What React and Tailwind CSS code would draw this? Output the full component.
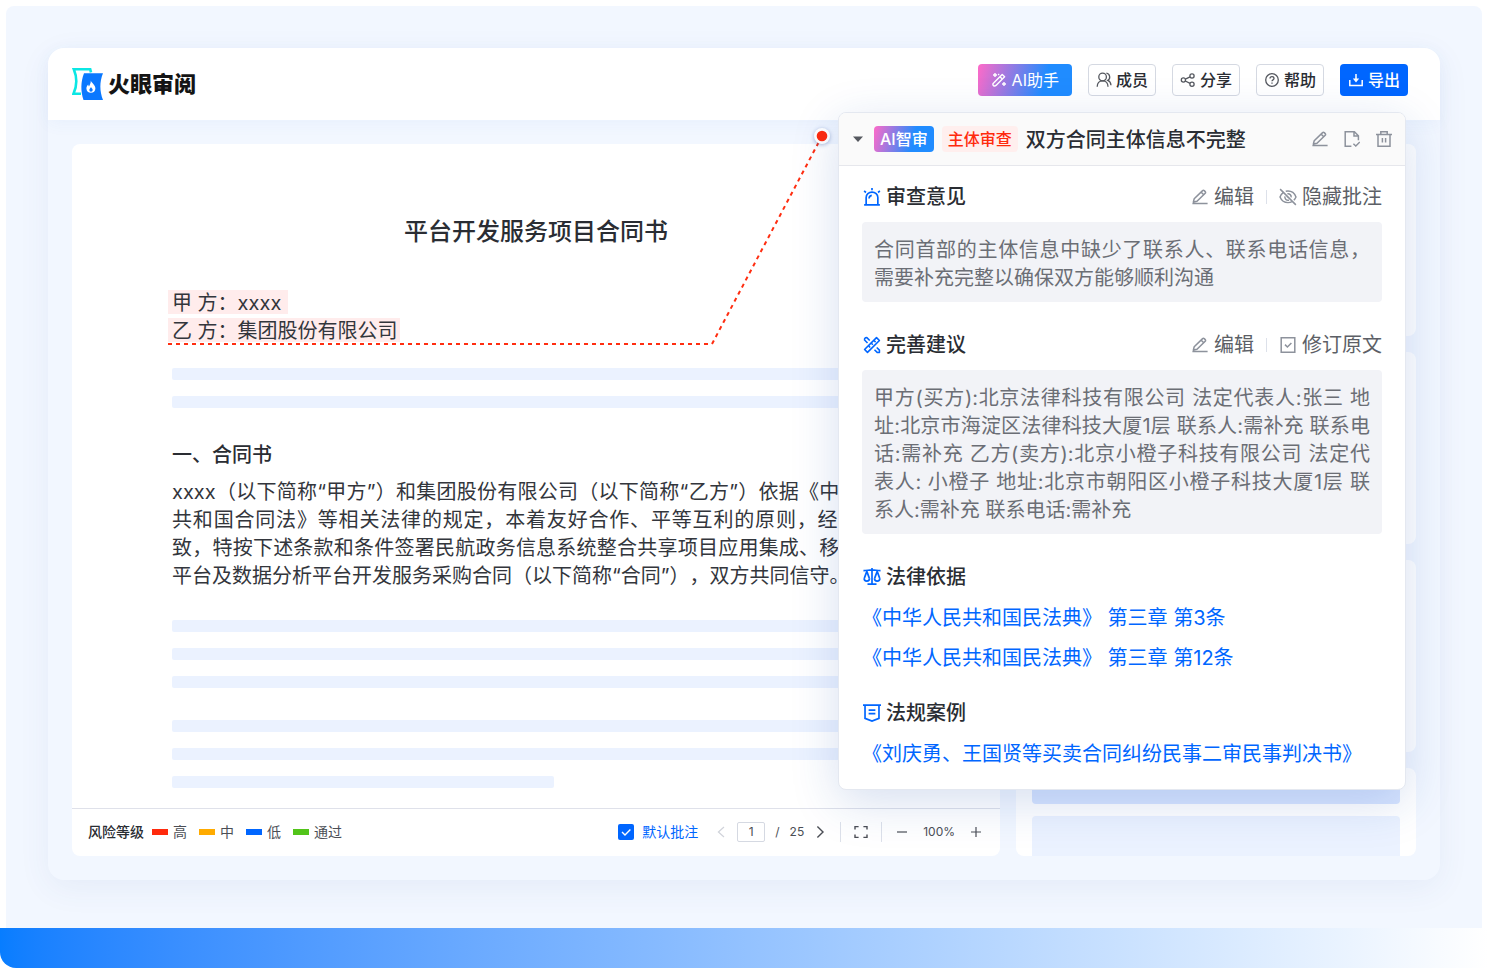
import React from "react";

const Icon = ({ children, className = "size-4", width = 1.2 }) => (
  <svg
    viewBox="0 0 16 16"
    className={`shrink-0 ${className}`}
    fill="none"
    stroke="currentColor"
    strokeWidth={width}
    aria-hidden="true"
  >
    {children}
  </svg>
);

const WandIcon = () => (
  <Icon width={1.4}>
    <path d="M11.2 2.4 13.6 4.8 5 13.4Q3.6 14.6 2.4 13.4 1.2 12.2 2.6 11Z" strokeLinejoin="round" />
    <path d="M9 4.8 11.2 7" />
    <path d="M4 1v4M2 3h4M13 10v4M11 12h4" />
    <path d="M7.6 1.800v1.400" />
  </Icon>
);
const MembersIcon = () => (
  <Icon width={1.3}>
    <circle cx="6.6" cy="5" r="3.8" />
    <path d="M1.2 14.800c0-3.400 2-6 5.400-6s5.400 2.600 5.400 6M10.400 1.200a3.900 3.900 0 0 1 1.400 7.200c2 .8 3 2.600 3.200 4.800" />
  </Icon>
);
const ShareIcon = () => (
  <Icon width={1.3}>
    <circle cx="3.4" cy="8" r="2.1" />
    <circle cx="12" cy="4" r="2.1" />
    <circle cx="12" cy="12.2" r="2.1" />
    <path d="m5.300 7.100 4.800-2.200M5.300 9l4.800 2.300" />
  </Icon>
);
const HelpIcon = () => (
  <Icon width={1.3}>
    <circle cx="8" cy="8" r="6.3" />
    <path d="M6 6.600c0-1.200.9-1.900 2-1.900s2 .8 2 1.800c0 1.400-2 1.400-2 2.800M8 10.400v1.300" />
  </Icon>
);
const ExportIcon = () => (
  <Icon width={1.5}>
    <path d="M1.800 8v5.400h12.400V8M8 2v6" />
    <path d="M4.800 6.600h6.400L8 10.400Z" fill="currentColor" stroke="none" />
  </Icon>
);
const EditIcon = () => (
  <Icon width={1.5}>
    <path d="M.4 14.600h15.200M1.400 13l.8-3.200L10.600 1.600q.8-.7 1.600 0l1 1q.8.8 0 1.600L5 12.200Z" strokeLinejoin="round" />
    <path d="m9.200 3.200 2.600 2.600" />
  </Icon>
);
const FileCheckIcon = () => (
  <Icon width={1.5}>
    <path d="M7.400 15.200H1.200V.8h9.200l4 4v4.400M10 1v4h4" />
    <path d="m9.400 12.800 2.400 2.200 4-4" />
  </Icon>
);
const TrashIcon = () => (
  <Icon width={1.5}>
    <path d="M0 3.600h16M4.800 3.200V.8h6.400v2.400M2 3.800v11.400h12V3.800M6.400 7v4.600M9.600 7v4.600" />
  </Icon>
);
const HideIcon = () => (
  <Icon className="-mx-px size-[18px]" width={1.3}>
    <path d="M4.200 3.600C2.800 4.600 1.600 6.100.9 8c1.300 3.200 3.900 5 7.100 5 1.300 0 2.600-.3 3.600-.9M6 2.900c.7-.2 1.300-.2 2-.2 3.200 0 5.800 1.900 7.100 5.300-.5 1.100-1.100 2.100-1.900 2.900" />
    <path d="M5.300 7.400a2.800 2.800 0 0 0 3.600 3.400M7.400 5.200A2.800 2.800 0 0 1 10.800 8.400M6.900 7.300l1.800 1.600M1 1l14 14" />
  </Icon>
);
const CheckBoxIcon = () => (
  <Icon width={1.5}>
    <path d="M1.200.8h13.600v14.400H1.200ZM5 7.600l2.400 2.400 4-4" />
  </Icon>
);
const AlarmIcon = () => (
  <Icon className="-mr-px size-[18px]" width={1.5}>
    <path d="M1 15h14M2.800 15V8.400a5.200 4.800 0 0 1 10.400 0V15M5.400 9.400C5.400 7.600 6.400 6.800 7.800 6.600" />
    <path d="M8 0v2M1 2.600l1.600 1.400M15 2.600 13.400 4" />
  </Icon>
);
const RulerPenIcon = () => (
  <Icon className="-mr-px size-[18px]" width={1.4}>
    <path d="M12 1.400 14.600 4 4 14.600 1.400 12Z" strokeLinejoin="round" />
    <path d="m9.800 4 1.400 1.400M7.400 6.400l1.400 1.400M5 8.800l1.400 1.400" />
    <path d="M4 6.200 1.400 3.600Q1 1.400 3.400 1.400L6 4M10.200 12.200l2.400 2.400h2V12.600L12.200 10.200" strokeLinejoin="round" />
  </Icon>
);
const ScaleIcon = () => (
  <Icon className="-mr-px size-[18px]" width={1.5}>
    <path d="M8 0v14.400M4 14.400h8M.4 2.400c3 0 5-.8 7.600-.8s4.600.8 7.600.8" />
    <path d="M3.400 3 1.200 9M3.400 3l2.200 6M1 9c0 1.800 1 2.600 2.400 2.600S5.800 10.800 5.800 9M12.600 3l-2.200 6M12.600 3l2.200 6M10.200 9c0 1.800 1 2.600 2.400 2.600s2.400-.8 2.400-2.600" />
  </Icon>
);
const CaseIcon = () => (
  <Icon className="-mr-px size-[18px]" width={1.5}>
    <path d="M0 1h16M1.800 1v11.800L8 15.200l6.200-2.400V1M5 5.400h6M5 8.600h6" />
  </Icon>
);

const Logo = () => (
  <a href="#" className="flex items-center gap-1 text-[#141414]">
    <svg viewBox="0 0 32 32" className="size-8" aria-hidden="true">
      <path
        d="M19 4.400 18.200 1.300H1.800C5 9 5 18 1.500 25.700H9"
        fill="none"
        stroke="#0be7e4"
        strokeWidth="2.6"
      />
      <path d="M12 5.200H31C27.400 14 27.600 23 31 32H11.500C8.600 23 8.600 14 12 5.200Z" fill="#0a78ff" />
      <path
        d="M18.800 12.600c.6 2.400 4.600 4.200 4.600 7.800 0 2.600-2 4.300-4.500 4.300s-4.500-1.700-4.500-4.300c0-1.700.9-2.800 1.800-3.800.1.900.3 1.400.8 1.800.8-1.500 2-3.200 1.800-5.800Z"
        fill="#fff"
      />
      <path d="M19 19c.4 1.100 1.700 1.600 1.700 3a1.700 1.700 0 0 1-3.400 0c0-1.300 1.300-1.700 1.700-3Z" fill="#0a78ff" />
    </svg>
    <span className="text-[22px] leading-8 font-black">火眼审阅</span>
  </a>
);

const HeaderButton = ({ icon, children }) => (
  <button className="flex h-8 items-center gap-1 rounded border border-[#d5d9e2] bg-white px-[7px] text-base font-medium text-[#2a2d33]">
    <span className="text-[#55585f]">{icon}</span>
    {children}
  </button>
);

const Header = () => (
  <header className="flex h-[72px] items-center justify-between rounded-t-2xl bg-white pr-8 pl-6 shadow-[0_4px_16px_rgba(60,110,220,0.05)]">
    <Logo />
    <div className="mb-2 flex gap-4">
      <button className="flex h-8 items-center gap-[5px] rounded bg-linear-[105deg,#ff6ac8_0%,#208cff_70%] px-[13px] text-base text-white">
        <WandIcon />
        AI助手
      </button>
      <HeaderButton icon={<MembersIcon />}>成员</HeaderButton>
      <HeaderButton icon={<ShareIcon />}>分享</HeaderButton>
      <HeaderButton icon={<HelpIcon />}>帮助</HeaderButton>
      <button className="flex h-8 items-center gap-1 rounded bg-[#0066ff] px-2 text-base font-medium text-white">
        <ExportIcon />
        导出
      </button>
    </div>
  </header>
);

const Bar = ({ short }) => (
  <div className={`h-3 rounded-xs bg-[#ebf2ff] ${short ? "w-[382px]" : "w-full"}`} />
);

const paragraph = [
  "xxxx（以下简称“甲方”）和集团股份有限公司（以下简称“乙方”）依据《中华人民",
  "共和国合同法》等相关法律的规定，本着友好合作、平等互利的原则，经协商一",
  "致，特按下述条款和条件签署民航政务信息系统整合共享项目应用集成、移动办公",
];

const levels = [
  ["高", "bg-[#ff2a0d]"],
  ["中", "bg-[#ffab00]"],
  ["低", "bg-[#0066ff]"],
  ["通过", "bg-[#52c41a]"],
];

const Toolbar = () => (
  <footer className="mt-5 flex h-12 items-center justify-between border-t border-[#dfe1ea] px-4 pb-0.5 text-sm text-[#4b4e55]">
    <div className="flex items-center gap-3">
      <span className="-mr-1 font-medium text-[#2a2d33]">风险等级</span>
      {levels.map(([name, color]) => (
        <span key={name} className="flex items-center gap-[5px]">
          <i className={`h-1.5 w-4 ${color}`} />
          {name}
        </span>
      ))}
    </div>
    <div className="flex items-center gap-3 text-xs">
      <label className="mr-[3px] flex items-center gap-2 text-sm text-[#0066ff]">
        <span className="grid size-4">
          <input
            type="checkbox"
            defaultChecked
            className="col-start-1 row-start-1 size-4 appearance-none rounded-xs bg-[#0066ff]"
          />
          <Icon className="pointer-events-none col-start-1 row-start-1 size-4 text-white" width={1.4}>
            <path d="m4 8 3 3 5.400-5.400" />
          </Icon>
        </span>
        默认批注
      </label>
      <div className="flex items-center gap-2">
        <button aria-label="上一页" className="text-[#d0d3da]">
          <Icon>
            <path d="M11 3 5.400 8 11 13" />
          </Icon>
        </button>
        <input
          aria-label="页码"
          defaultValue="1"
          className="h-5 w-7 rounded-xs border border-[#d5d9e2] bg-transparent text-center"
        />
        <span className="px-0.5">/</span>
        <span>25</span>
        <button aria-label="下一页" className="text-[#4b4e55]">
          <Icon width={1.4}>
            <path d="m5.400 2.600 5.600 5.400-5.600 5.400" />
          </Icon>
        </button>
      </div>
      <i className="h-5 w-px bg-[#dde1ea]" />
      <button aria-label="全屏">
        <Icon width={1.4}>
          <path d="M2 5.600V2.600h3.600M10.400 2.600H14v3M14 10.400v3h-3.600M5.600 13.400H2v-3" />
        </Icon>
      </button>
      <i className="h-5 w-px bg-[#dde1ea]" />
      <button aria-label="缩小">
        <Icon>
          <path d="M3 8h10" />
        </Icon>
      </button>
      <span className="px-px">100%</span>
      <button aria-label="放大">
        <Icon>
          <path d="M3 8h10M8 3v10" />
        </Icon>
      </button>
    </div>
  </footer>
);

const Contract = () => (
  <article className="relative min-w-0 flex-1 rounded-lg bg-white">
    <div className="px-[100px] pt-[72px] text-xl leading-7 text-[#33363c]">
      <h1 className="text-center text-2xl leading-8 font-medium text-[#2a2d33]">平台开发服务项目合同书</h1>
      <div className="-mx-1 mt-10 flex flex-col items-start gap-1 pt-0.5 leading-[22px]">
        <p className="w-[120px] bg-[#ffecec] px-1 pt-0.5 whitespace-pre">甲 方：xxxx</p>
        <p className="bg-[#ffecec] pt-0.5 pr-0.5 pl-1 whitespace-pre">乙 方：集团股份有限公司</p>
      </div>
      <div className="mt-[26px] space-y-4">
        <Bar />
        <Bar />
      </div>
      <h2 className="mt-[33px] font-medium text-[#2a2d33]">一、合同书</h2>
      <div className="mt-[9px] [text-spacing-trim:space-all]">
        {paragraph.map((line) => (
          <p key={line} className="text-justify whitespace-nowrap [text-align-last:justify]">
            {line}
          </p>
        ))}
        <p>平台及数据分析平台开发服务采购合同（以下简称“合同”），双方共同信守。</p>
      </div>
      <div className="mt-[30px] space-y-4">
        <Bar />
        <Bar />
        <Bar />
      </div>
      <div className="mt-8 space-y-4">
        <Bar />
        <Bar />
        <Bar short />
      </div>
    </div>
    <Toolbar />
    <svg
      viewBox="0 0 780 230"
      className="pointer-events-none absolute -top-5 left-0 h-[230px] w-[780px]"
      aria-hidden="true"
    >
      <path d="M96 220H640L750 12" fill="none" stroke="#ff2d10" strokeWidth="2" strokeDasharray="4 4" />
      <circle cx="750" cy="12" r="8" fill="#fff" className="drop-shadow-[0_1px_2px_rgba(40,80,160,0.4)]" />
      <circle cx="750" cy="12" r="5.3" fill="#ff2a0d" />
    </svg>
  </article>
);

const SideCards = () => (
  <aside className="flex w-[400px] shrink-0 flex-col gap-4">
    <div className="h-48 rounded-lg bg-white" />
    <div className="h-48 rounded-lg bg-white" />
    <div className="h-48 rounded-lg bg-white" />
    <div className="flex flex-1 flex-col gap-3 rounded-lg bg-white px-4 pt-4">
      <div className="h-5 rounded-sm bg-[#d8e5ff]" />
      <div className="flex-1 rounded-t-sm bg-[#ebf2ff]" />
    </div>
  </aside>
);

const Action = ({ icon, children }) => (
  <button className="flex items-center gap-1.5 text-[#5c5f66]">
    <span className="text-[#8d929c]">{icon}</span>
    {children}
  </button>
);

const SectionTitle = ({ icon, title, action }) => (
  <div className="flex h-[30px] items-center justify-between">
    <h3 className="flex items-center gap-1.5 pl-px font-medium text-[#2a2d33]">
      <span className="text-[#0066ff]">{icon}</span>
      {title}
    </h3>
    {action && (
      <div className="flex items-center gap-3">
        <Action icon={<EditIcon />}>编辑</Action>
        <i className="mr-px h-3.5 w-px bg-[#dde1ea]" />
        {action}
      </div>
    )}
  </div>
);

const Quote = ({ children }) => (
  <p className="mt-2.5 rounded bg-[#f2f3f7] px-3 pt-3.5 pb-2.5 text-justify leading-7 text-[#6b6e75] [text-spacing-trim:space-all]">
    {children}
  </p>
);

const LawLink = ({ children }) => (
  <a href="#" className="mt-2.5 block h-[30px] pt-px text-[#0066ff] [text-spacing-trim:space-all]">
    {children}
  </a>
);

const ReviewPanel = () => (
  <section className="absolute top-16 right-[34px] w-[568px] overflow-hidden rounded-lg border border-[#e4e8f0] bg-white text-xl leading-[30px] shadow-[0_12px_48px_rgba(30,80,170,0.18)]">
    <header className="flex h-[53px] items-center gap-2 border-b border-[#e6e7ec] bg-[#fafafa] pr-[13px] pl-[11px]">
      <button aria-label="收起" className="text-[#55585f]">
        <Icon>
          <path d="M3 5.400h10L8 11Z" fill="currentColor" stroke="none" />
        </Icon>
      </button>
      <span className="rounded bg-linear-[105deg,#ff6ac8_0%,#208cff_65%] px-1.5 text-base leading-[26px] font-medium text-white">
        AI智审
      </span>
      <span className="rounded bg-[#ffefee] px-1.5 text-base leading-[26px] font-medium text-[#ff2a0d]">主体审查</span>
      <h2 className="flex-1 pt-0.5 font-medium text-[#2a2d33]">双方合同主体信息不完整</h2>
      <div className="flex gap-4 text-[#8d929c]">
        <button aria-label="编辑">
          <EditIcon />
        </button>
        <button aria-label="确认">
          <FileCheckIcon />
        </button>
        <button aria-label="删除">
          <TrashIcon />
        </button>
      </div>
    </header>
    <div className="px-[23px] pt-4 pb-[21px]">
      <SectionTitle icon={<AlarmIcon />} title="审查意见" action={<Action icon={<HideIcon />}>隐藏批注</Action>} />
      <Quote>合同首部的主体信息中缺少了联系人、联系电话信息，需要补充完整以确保双方能够顺利沟通</Quote>
      <div className="mt-7">
        <SectionTitle
          icon={<RulerPenIcon />}
          title="完善建议"
          action={<Action icon={<CheckBoxIcon />}>修订原文</Action>}
        />
        <Quote>
          甲方(买方):北京法律科技有限公司 法定代表人:张三 地址:北京市海淀区法律科技大厦1层 联系人:需补充
          联系电话:需补充 乙方(卖方):北京小橙子科技有限公司 法定代表人: 小橙子
          地址:北京市朝阳区小橙子科技大厦1层 联系人:需补充 联系电话:需补充
        </Quote>
      </div>
      <div className="mt-7">
        <SectionTitle icon={<ScaleIcon />} title="法律依据" />
        <LawLink>《中华人民共和国民法典》 第三章 第3条</LawLink>
        <LawLink>《中华人民共和国民法典》 第三章 第12条</LawLink>
      </div>
      <div className="mt-[26px]">
        <SectionTitle icon={<CaseIcon />} title="法规案例" />
        <LawLink>《刘庆勇、王国贤等买卖合同纠纷民事二审民事判决书》</LawLink>
      </div>
    </div>
  </section>
);

export default function App() {
  return (
    <div className="min-h-screen bg-white pt-1.5 font-[Inter,'Noto_Sans_CJK_SC',sans-serif]" lang="zh-CN">
      <div className="mx-1.5 rounded-t-lg bg-[#f2f7ff] px-[42px] pt-[42px] pb-12">
        <main className="relative rounded-2xl bg-[#f2f7ff] shadow-[0_8px_32px_rgba(60,90,160,0.07)]">
          <Header />
          <div className="flex gap-4 p-6">
            <Contract />
            <SideCards />
          </div>
          <ReviewPanel />
        </main>
      </div>
      <div className="h-10 rounded-bl-2xl bg-linear-to-r from-[#077dff] to-white" />
    </div>
  );
}
